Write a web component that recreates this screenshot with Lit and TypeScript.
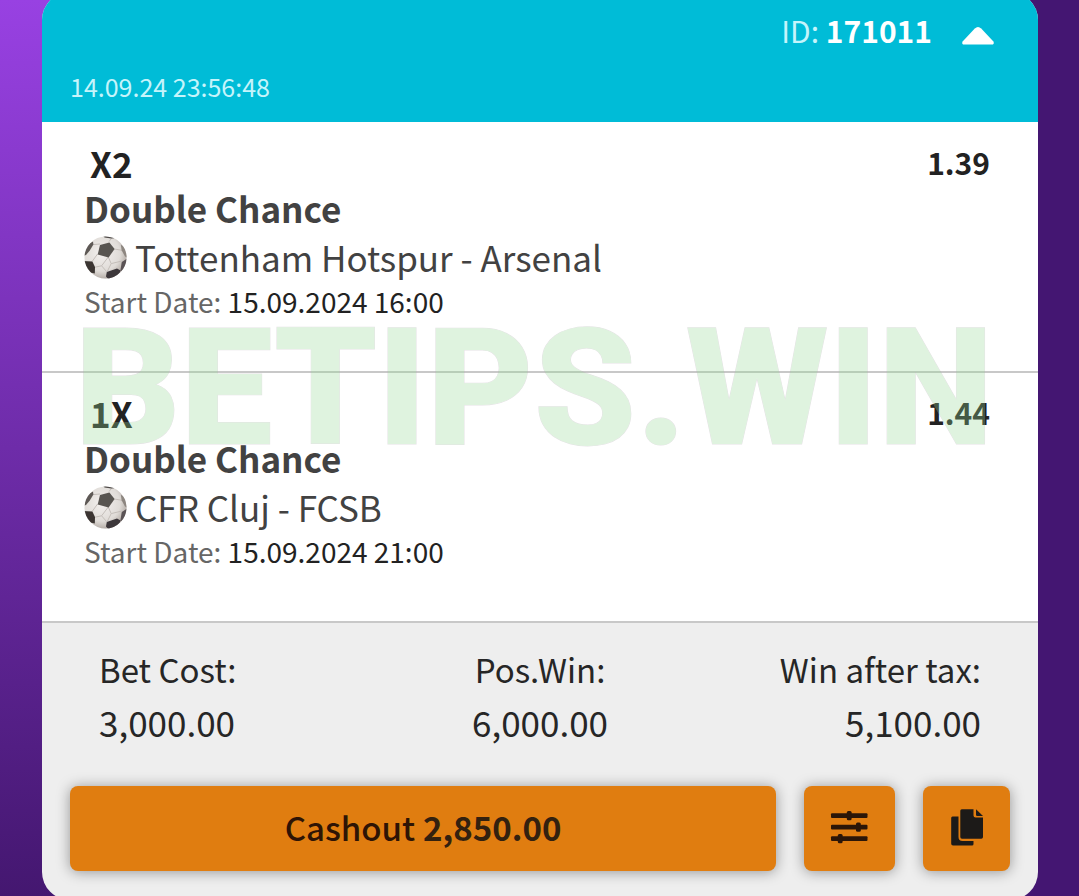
import { LitElement, html, svg, css } from "lit";
import { customElement, property } from "lit/decorators.js";

interface Selection {
  pick: string;
  market: string;
  match: string;
  start: string;
  odds: string;
}

const selections: Selection[] = [
  { pick: "X2", market: "Double Chance", match: "Tottenham Hotspur - Arsenal", start: "15.09.2024 16:00", odds: "1.39" },
  { pick: "1X", market: "Double Chance", match: "CFR Cluj - FCSB", start: "15.09.2024 21:00", odds: "1.44" },
];

const totals = [
  { label: "Bet Cost:", value: "3,000.00" },
  { label: "Pos.Win:", value: "6,000.00" },
  { label: "Win after tax:", value: "5,100.00" },
];

@customElement("soccer-ball")
export class SoccerBall extends LitElement {
  static styles = css`
    :host { display: block; flex: none; width: 43px; height: 43px; }
    svg { display: block; width: 100%; height: 100%; }
  `;

  render() {
    return html`<svg viewBox="0 0 43 43" aria-hidden="true">
      <defs>
        <radialGradient id="skin" cx="0.42" cy="0.4" r="0.64">
          <stop offset="0" stop-color="#f3f0ee" />
          <stop offset="0.65" stop-color="#e0dcd8" />
          <stop offset="0.88" stop-color="#bdb6b0" />
          <stop offset="1" stop-color="#857c76" />
        </radialGradient>
        <filter id="soft"><feGaussianBlur stdDeviation="0.6" /></filter>
        <clipPath id="disc"><circle cx="21.5" cy="21.5" r="21" /></clipPath>
      </defs>
      ${svg`<g clip-path="url(#disc)">
        <rect width="43" height="43" fill="url(#skin)" />
        <g filter="url(#soft)">
          <path d="M30.300 13L37.600 14.200M24.300 21L27.200 27.600L37.800 25M27.200 27.600L23.400 35.200M13.700 17.800L8.200 25.400M11 31.200L17.600 29.800L24.300 21M17.600 29.800L22.600 35.600M16 8L9 8.600M25 5.600L27.400 2.400" fill="none" stroke="#c4beb9" stroke-width="1" />
          <path d="M16 9L25.400 6.400L30.600 13L24.600 21.600L13.700 18.400Z" fill="#595551" />
          <path d="M-1 15L3.400 8.800L9 5.600L9.400 8.600L5.800 14.400L2 19L-1 20Z" fill="#5d5854" />
          <path d="M18 -1L29.500 -0.500L30 2.200L27.400 2.400L20.600 1.400Z" fill="#4b4745" />
          <path d="M-1 25L8.400 25.600L11 31L10.800 37.600L4 36Z" fill="#3b3633" />
          <path d="M36.800 8.600L44 14L44 22L41 20.400L37.600 14.200Z" fill="#8d8680" />
          <path d="M37.800 26L44 22V32L39 37L36.400 34.400Z" fill="#5a5254" />
          <path d="M22.800 36L33 32.600L36.600 34.400L34.600 39L25 44L22 40.400Z" fill="#3d373b" />
        </g>
      </g>`}
    </svg>`;
  }
}

@customElement("bet-selection")
export class BetSelection extends LitElement {
  @property({ attribute: false }) data!: Selection;

  static styles = css`
    :host {
      display: flex;
      justify-content: space-between;
      align-items: flex-start;
      padding: 19px 48px 51px 42px;
      border-bottom: 2px solid #c8c8c8;
      color: #222;
    }
    .pick { padding-left: 6px; font-size: 35px; line-height: 42px; font-weight: 700; }
    .market { font-size: 35px; line-height: 48px; font-weight: 700; color: #424242; }
    .match { display: flex; align-items: center; gap: 8px; font-size: 35px; line-height: 50px; color: #424242; }
    .start { font-size: 28px; line-height: 38px; }
    .label { color: #666; }
    .odds { font-size: 30px; line-height: 40px; font-weight: 700; }
  `;

  render() {
    const s = this.data;
    return html`
      <div>
        <div class="pick">${s.pick}</div>
        <div class="market">${s.market}</div>
        <div class="match"><soccer-ball></soccer-ball><span>${s.match}</span></div>
        <div class="start"><span class="label">Start Date:</span> ${s.start}</div>
      </div>
      <div class="odds">${s.odds}</div>
    `;
  }
}

@customElement("app-root")
export class AppRoot extends LitElement {
  static styles = css`
    :host {
      display: block;
      box-sizing: border-box;
      min-height: 100vh;
      max-height: 100vh;
      overflow: hidden;
      padding: 0 41px 0 42px;
      font-family: "Noto Sans CJK SC", sans-serif;
      background:
        linear-gradient(#9841e2, #441770) left / 50% 100% no-repeat,
        #441672;
    }
    .slip {
      margin-top: -8px;
      border-radius: 28px;
      overflow: hidden;
      background: #eee;
    }
    .head {
      padding: 16px 42px 18px 28px;
      background: #00bcd7;
      color: #fff;
    }
    .id-row { display: flex; justify-content: flex-end; align-items: center; gap: 28px; font-size: 30px; line-height: 44px; }
    .id-row .label, .placed { color: #c5f4fb; }
    .placed { font-size: 25px; line-height: 36px; padding-top: 16px; }
    .toggle { display: flex; padding: 0; border: 0; background: none; cursor: pointer; }
    .toggle svg { width: 36px; height: 34px; }
    .list { position: relative; padding-top: 1px; background: #fff; }
    .mark {
      position: absolute;
      inset: 0;
      display: flex;
      align-items: center;
      justify-content: center;
      padding: 30px 12px 0 0;
      font: 900 164px/1 Roboto, sans-serif;
      color: #96d996;
      -webkit-text-stroke: 1px #a9a3a9;
      paint-order: stroke fill;
      opacity: 0.3;
      pointer-events: none;
    }
    .totals {
      display: grid;
      grid-template-columns: repeat(3, 1fr);
      margin: 0;
      padding: 19px 57px 38px;
      color: #262626;
    }
    .total:nth-child(2) { text-align: center; }
    .total:last-child { text-align: right; }
    dt { font-size: 33px; line-height: 54px; }
    dd { margin: 0; font-size: 35px; line-height: 52px; }
    .actions { display: flex; gap: 28px; padding: 0 28px 29px; }
    .action {
      display: flex;
      align-items: center;
      justify-content: center;
      height: 85px;
      padding: 0;
      border: 0;
      border-radius: 8px;
      background: #e07d10;
      box-shadow: 0 1px 14px rgba(0, 0, 0, 0.38);
      color: #2e1405;
      font: 500 33px/48px "Noto Sans CJK SC", sans-serif;
      cursor: pointer;
    }
    .cashout { flex: 1; gap: 8px; padding-bottom: 4px; }
    .cashout b { font-weight: 700; color: #33210f; }
    .adjust { width: 91px; }
    .copy { width: 87px; }
    .action svg { display: block; width: 40px; height: 40px; }
  `;

  render() {
    return html`
      <main class="slip">
        <header class="head">
          <div class="id-row">
            <div><span class="label">ID:</span> <b>171011</b></div>
            <button class="toggle" aria-label="Collapse">
              <svg viewBox="0 -10 36 34"><path d="M4.400 21.500Q1.200 21.500 2.600 18.400L14.800 5.400Q18 2.400 21.200 5.400L33.400 18.400Q34.800 21.500 31.600 21.500Z" fill="#fff" /></svg>
            </button>
          </div>
          <div class="placed">14.09.24 23:56:48</div>
        </header>
        <section class="list">
          ${selections.map((s) => html`<bet-selection .data=${s}></bet-selection>`)}
          <div class="mark">BETIPS.WIN</div>
        </section>
        <dl class="totals">
          ${totals.map((t) => html`<div class="total"><dt>${t.label}</dt><dd>${t.value}</dd></div>`)}
        </dl>
        <div class="actions">
          <button class="action cashout"><span>Cashout</span><b>2,850.00</b></button>
          <button class="action adjust" aria-label="Cashout options">
            <svg viewBox="1 2 40 40" fill="#2b1608">
              <rect x="2" y="6.300" width="36.500" height="4.600" rx="1" /><rect x="17.800" y="4" width="4.800" height="9.200" rx="1.500" />
              <rect x="2" y="17.800" width="36.500" height="4.600" rx="1" /><rect x="27" y="15.500" width="4.800" height="9.200" rx="1.500" />
              <rect x="2" y="29.300" width="36.500" height="4.600" rx="1" /><rect x="8.800" y="27" width="4.800" height="9.200" rx="1.500" />
            </svg>
          </button>
          <button class="action copy" aria-label="Copy bet slip">
            <svg viewBox="0 2 40 40" fill="#1c1a18">
              <path d="M5.500 9.500H11.500V30Q11.500 34 15.500 34H26.500V37Q26.500 38.500 25 38.500H6Q4.200 38.500 4.200 36.700V11Q4.200 9.500 5.500 9.500Z" />
              <path d="M14.800 2.200H26.500V8.500Q26.500 10.600 28.600 10.600H36V30Q36 31.800 34.300 31.800H15Q13.300 31.800 13.300 30V3.700Q13.300 2.200 14.800 2.200Z" />
              <path d="M29 2.200L36 9H30.200Q29 9 29 7.800Z" />
            </svg>
          </button>
        </div>
      </main>
    `;
  }
}
